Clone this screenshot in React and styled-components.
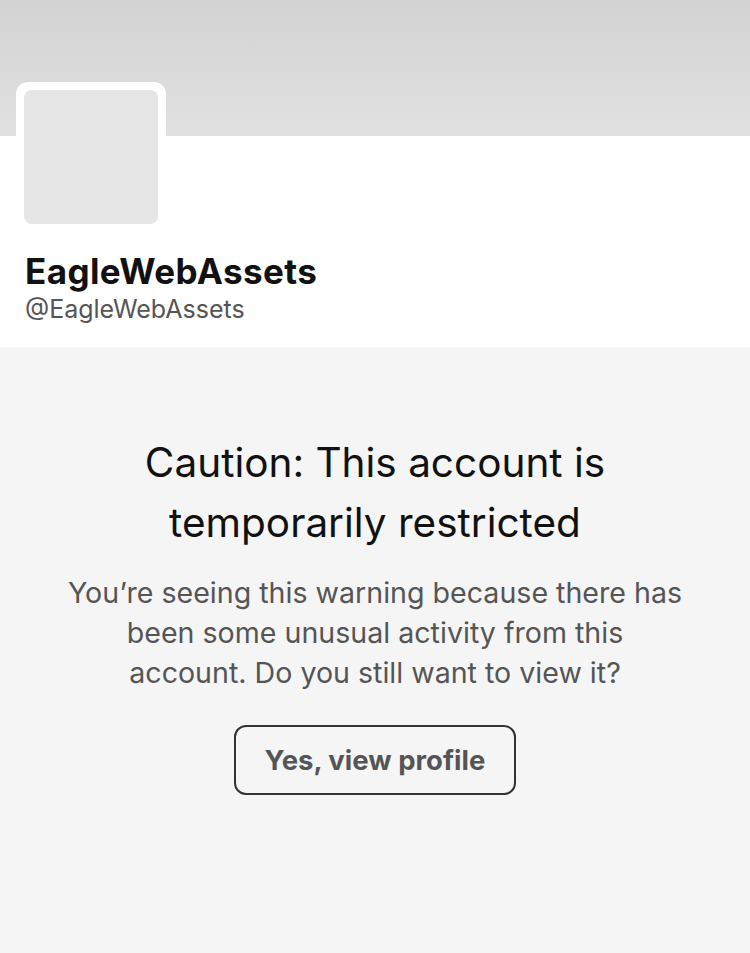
import React from 'react'
import styled, { createGlobalStyle } from 'styled-components'

const Global = createGlobalStyle`
  html, body {
    margin: 0;
    padding: 0;
    background: #f5f5f5;
    font-family: Inter, "Liberation Sans", sans-serif;
  }
`

const Page = styled.div`
  width: 750px;
  min-height: 953px;
  display: flex;
  flex-direction: column;
  background: #f5f5f5;
`

const Banner = styled.div`
  height: 136px;
  background: linear-gradient(180deg, #d3d3d3 0%, #e1e1e1 100%);
`

const Header = styled.div`
  background: #fff;
  height: 211px;
  padding: 0 16px;
  display: flex;
  flex-direction: column;
`

const AvatarFrame = styled.div`
  width: 150px;
  height: 150px;
  margin-top: -54px;
  box-sizing: border-box;
  padding: 8px;
  background: #fff;
  border-radius: 12px;
`

const Avatar = styled.div`
  width: 100%;
  height: 100%;
  border-radius: 8px;
  background: #e6e6e6;
`

const Name = styled.div`
  margin: 19px 0 0 9px;
  font-size: 35px;
  font-weight: 700;
  color: #111;
  letter-spacing: 0.4px;
  line-height: 40px;
`

const Handle = styled.div`
  margin: 3px 0 0 9px;
  font-size: 25px;
  color: #555;
  line-height: 30px;
`

const Warning = styled.div`
  display: flex;
  flex-direction: column;
  align-items: center;
  text-align: center;
  padding-top: 86px;
`

const Title = styled.h1`
  margin: 0;
  font-size: 40.5px;
  font-weight: 400;
  line-height: 60px;
  color: #111;
  width: 520px;
`

const Text = styled.p`
  margin: 20px 0 0;
  font-size: 28.6px;
  line-height: 40px;
  color: #555;
  width: 618px;
`

const Button = styled.button`
  margin-top: 32px;
  width: 282px;
  height: 70px;
  border: 2px solid #333;
  border-radius: 12px;
  background: transparent;
  font-family: inherit;
  font-size: 27.5px;
  font-weight: 700;
  color: #555;
  cursor: pointer;
`

function App() {
  return (
    <Page>
      <Global />
      <Banner />
      <Header>
        <AvatarFrame>
          <Avatar />
        </AvatarFrame>
        <Name>EagleWebAssets</Name>
        <Handle>@EagleWebAssets</Handle>
      </Header>
      <Warning>
        <Title>Caution: This account is temporarily restricted</Title>
        <Text>
          You’re seeing this warning because there has been some unusual activity from this account. Do you still want to view it?
        </Text>
        <Button>Yes, view profile</Button>
      </Warning>
    </Page>
  )
}

export default App
